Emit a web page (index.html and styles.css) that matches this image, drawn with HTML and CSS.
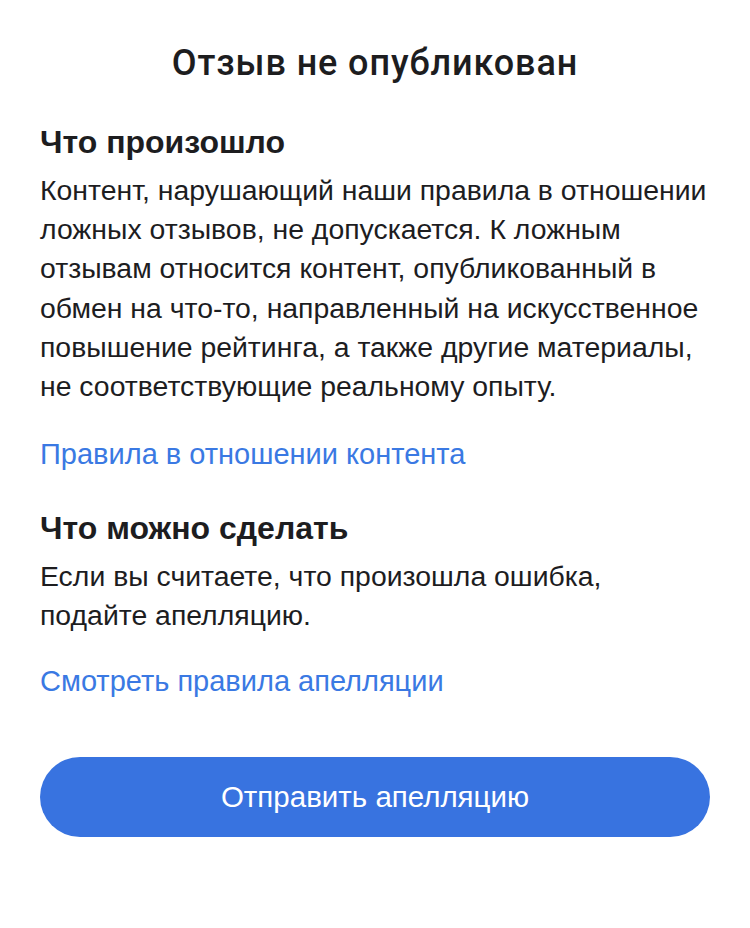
FILE: index.html
```html
<!DOCTYPE html>
<html lang="ru">
<head>
<meta charset="utf-8">
<link rel="stylesheet" href="styles.css">
</head>
<body>
<main class="sheet">
  <h1 class="title">Отзыв не опубликован</h1>
  <section class="block">
    <h2 class="heading">Что произошло</h2>
    <p class="text">Контент, нарушающий наши правила в отношении ложных отзывов, не допускается. К ложным отзывам относится контент, опубликованный в обмен на что-то, направленный на искусственное повышение рейтинга, а также другие материалы, не соответствующие реальному опыту.</p>
    <a class="link" href="#">Правила в отношении контента</a>
  </section>
  <section class="block block-second">
    <h2 class="heading">Что можно сделать</h2>
    <p class="text">Если вы считаете, что произошла ошибка,<br>подайте апелляцию.</p>
    <a class="link" href="#">Смотреть правила апелляции</a>
  </section>
  <button class="action" type="button">Отправить апелляцию</button>
</main>
</body>
</html>
```

FILE: styles.css
```css
html, body {
  margin: 0;
  padding: 0;
  background: #ffffff;
}
.sheet {
  font-family: "Liberation Sans", Arial, sans-serif;
  color: #1d1d1f;
  padding: 41px 40px 0 40px;
  display: flex;
  flex-direction: column;
}
.title {
  margin: 0;
  text-align: center;
  font-family: Roboto, "Liberation Sans", sans-serif;
  font-size: 36px;
  font-weight: 500;
  letter-spacing: 0.9px;
  line-height: 44px;
}
.block {
  display: flex;
  flex-direction: column;
  align-items: flex-start;
  margin-top: 37px;
}
.block-second {
  margin-top: 34px;
}
.heading {
  margin: 0;
  font-size: 32px;
  font-weight: 700;
  line-height: 40px;
}
.text {
  margin: 9px 0 0 0;
  font-size: 28.4px;
  line-height: 39.2px;
}
.link {
  margin-top: 29px;
  font-size: 29px;
  line-height: 39px;
  color: #3a79e3;
  text-decoration: none;
}
.block-second .link {
  margin-top: 26px;
}
.action {
  margin-top: 56px;
  height: 80px;
  border: none;
  border-radius: 40px;
  background: #3873e0;
  color: #ffffff;
  font-family: "Liberation Sans", Arial, sans-serif;
  font-size: 29.5px;
}
```
